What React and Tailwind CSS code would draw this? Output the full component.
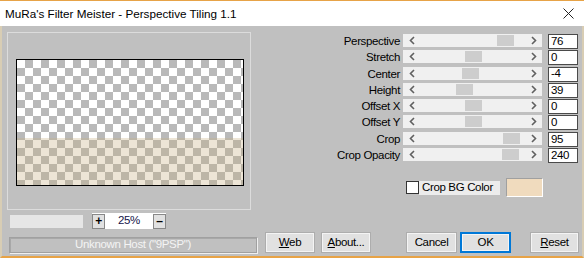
import React from 'react';

const SLIDERS = [
  { label: 'Perspective', value: '76', thumb: 77 },
  { label: 'Stretch', value: '0', thumb: 45 },
  { label: 'Center', value: '-4', thumb: 42 },
  { label: 'Height', value: '39', thumb: 36 },
  { label: 'Offset X', value: '0', thumb: 45 },
  { label: 'Offset Y', value: '0', thumb: 45 },
  { label: 'Crop', value: '95', thumb: 83 },
  { label: 'Crop Opacity', value: '240', thumb: 82 },
];

// dialog font: tall and narrow, approximated with Liberation Sans
const UI_FONT = "font-['Liberation_Sans',sans-serif] text-[11.5px] tracking-[-0.35px]";

function Chevron({ dir }) {
  return (
    <svg width="6" height="9" viewBox="0 0 6 9" className="shrink-0">
      <polyline
        points={dir === 'left' ? '5,1 1.5,4.5 5,8' : '1,1 4.5,4.5 1,8'}
        fill="none"
        stroke="#606060"
        strokeWidth="1.6"
      />
    </svg>
  );
}

function ScrollBar({ thumb }) {
  return (
    <div className="flex h-[13px] w-[139px] items-center bg-[#f0f0f0]">
      <div className="flex w-[17px] justify-center"><Chevron dir="left" /></div>
      <div className="flex h-full flex-1 items-center">
        <div className="h-[11px] w-[17px] bg-[#cdcdcd]" style={{ marginLeft: thumb }} />
      </div>
      <div className="flex w-[17px] justify-center"><Chevron dir="right" /></div>
    </div>
  );
}

function Btn({ children, className = '' }) {
  return (
    <button
      className={`flex h-[21px] items-center justify-center border border-[#adadad] bg-[#e1e1e1] text-black shadow-[inset_0_0_0_1px_#f4f4f4] ${UI_FONT} ${className}`}
    >
      {children}
    </button>
  );
}

export default function App() {
  return (
    <div className="flex h-[258px] w-[584px] flex-col overflow-hidden border-t border-[#e7a347] bg-white">
      {/* Title bar */}
      <div className="flex h-[25px] shrink-0 items-center justify-between pl-[5px] pr-[10px]">
        <span className="font-['Liberation_Sans',sans-serif] text-[11.7px] text-black">
          MuRa's Filter Meister - Perspective Tiling 1.1
        </span>
        <svg width="11" height="11" viewBox="0 0 11 11">
          <path d="M0.5 0.5 L10.5 10.5 M10.5 0.5 L0.5 10.5" stroke="#222" strokeWidth="1" />
        </svg>
      </div>

      {/* Body */}
      <div className={`flex flex-1 flex-col border-x-2 border-b-2 border-l-[#d8cdb4] border-r-[#d8cdb4] border-b-[#e7a347] bg-[#c0c0c0] pt-[6px] ${UI_FONT}`}>
        <div className="flex h-[197px]">
          {/* Left: preview */}
          <div className="ml-[5px] flex w-[244px] flex-col">
            <div className="h-[178px] border border-[#dcdcdc] pl-[8px] pt-[26px]">
              <div className="flex h-[127px] w-[228px] flex-col border border-black">
                <div className="h-[78px] bg-[conic-gradient(#b9b9b9_90deg,#ffffff_90deg_180deg,#b9b9b9_180deg_270deg,#ffffff_270deg)] bg-[length:16px_16px]" />
                <div className="flex-1 bg-[conic-gradient(#bdb6a7_90deg,#ede5d6_90deg_180deg,#bdb6a7_180deg_270deg,#ede5d6_270deg)] bg-[length:16px_16px] bg-[position:0_2px]" />
              </div>
            </div>
            <div className="mt-[3px] flex h-[16px] items-center">
              <div className="ml-[3px] h-[13px] w-[73px] bg-[#e6e6e6]" />
              <div className="ml-[9px] flex h-[16px] w-[74px] items-center bg-white">
                <div className="flex h-[15px] w-[13px] items-center justify-center border border-[#888] bg-[#e1e1e1] text-[12px] font-bold leading-none">+</div>
                <div className="flex-1 text-center text-[#14144a]">25%</div>
                <div className="flex h-[15px] w-[13px] items-center justify-center border border-[#888] bg-[#e1e1e1] text-[12px] font-bold leading-none">–</div>
              </div>
            </div>
          </div>

          {/* Right: controls */}
          <div className="flex flex-1 flex-col pt-[2px]">
            {SLIDERS.map((s) => (
              <div key={s.label} className="flex h-[16.3px] items-start">
                <div className="w-[149px] text-right leading-[14px] text-black">{s.label}</div>
                <div className="ml-[3px]"><ScrollBar thumb={s.thumb} /></div>
                <div className="ml-[6px] flex h-[15px] w-[30px] items-center border border-[#4a4a4a] bg-white pl-[2px] leading-none text-black">
                  {s.value}
                </div>
              </div>
            ))}
            <div className="mt-[14px] flex items-center">
              <div className="ml-[155px] h-[13px] w-[13px] border border-[#333] bg-white" />
              <div className="flex h-[14px] w-[81px] items-center whitespace-nowrap bg-[#ececec] pl-[3px] text-black">Crop BG Color</div>
              <div className="ml-[6px] h-[19px] w-[37px] border border-t-[#a0a0a0] border-l-[#a0a0a0] border-r-white border-b-white bg-[#f0dbbe]" />
            </div>
          </div>
        </div>

        {/* Bottom row */}
        <div className="mt-[2px] flex h-[22px] items-end">
          <div className="ml-[7px] flex h-[16px] w-[248px] items-center justify-center border border-[#a0a0a0] text-[#f4f4f4] shadow-[inset_1px_1px_0_#a8a8a8,1px_1px_0_#efefef]">
            Unknown Host ("9PSP")
          </div>
          <Btn className="ml-[8px] w-[50px]"><span><u>W</u>eb</span></Btn>
          <Btn className="ml-[6px] w-[50px]"><span><u>A</u>bout...</span></Btn>
          <Btn className="ml-[35px] w-[51px]">Cancel</Btn>
          <Btn className="ml-[3px] w-[51px] !border-2 !border-[#0078d7]">OK</Btn>
          <Btn className="ml-[19px] w-[49px]"><span><u>R</u>eset</span></Btn>
        </div>
      </div>
    </div>
  );
}
